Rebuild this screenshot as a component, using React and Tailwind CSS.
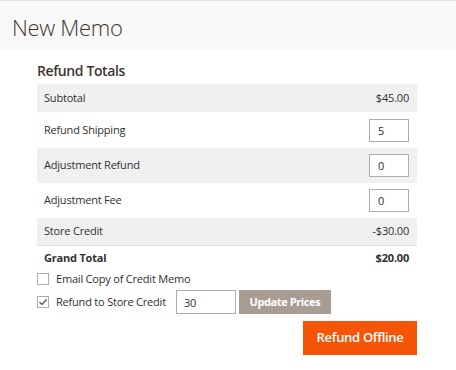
export default function App() {
  const font = { fontFamily: '"Open Sans", "Liberation Sans", sans-serif' };
  return (
    <div className="w-[456px] h-[370px] bg-white text-[#303030] overflow-hidden" style={font}>
      <div className="h-[50px] bg-[#f8f8f8] border-t border-[#e3e3e3] flex items-center pl-[12px]">
        <h1 className="text-[22px] font-light text-[#41362f] leading-none mt-[3px] tracking-[-0.3px]">New Memo</h1>
      </div>
      <div className="pl-[37px] pt-[11px]">
        <div className="w-[380px]">
          <div className="h-[20px] leading-[20px] text-[14px] font-semibold text-[#41362f] mb-[3px] tracking-[-0.4px]">Refund Totals</div>
          <div className="text-[11px] tracking-[-0.2px]">
            <div className="h-[28px] bg-[#f0f0f0] flex items-center justify-between pl-[7px] pr-[8px]">
              <span>Subtotal</span>
              <span>$45.00</span>
            </div>
            <div className="h-[36px] flex items-center justify-between pl-[7px] pr-[8px]">
              <span>Refund Shipping</span>
              <input className="w-[40px] h-[23px] border border-[#adadad] bg-white px-[8px] text-[11px] outline-none" defaultValue="5" />
            </div>
            <div className="h-[35px] bg-[#f0f0f0] flex items-center justify-between pl-[7px] pr-[8px]">
              <span>Adjustment Refund</span>
              <input className="w-[40px] h-[23px] border border-[#adadad] bg-white px-[8px] text-[11px] outline-none" defaultValue="0" />
            </div>
            <div className="h-[35px] flex items-center justify-between pl-[7px] pr-[8px]">
              <span>Adjustment Fee</span>
              <input className="w-[40px] h-[23px] border border-[#adadad] bg-white px-[8px] text-[11px] outline-none" defaultValue="0" />
            </div>
            <div className="h-[28px] bg-[#f0f0f0] flex items-center justify-between pl-[7px] pr-[8px] border-b border-[#e3e3e3]">
              <span>Store Credit</span>
              <span>-$30.00</span>
            </div>
            <div className="h-[24px] flex items-center justify-between pl-[7px] pr-[8px] font-bold">
              <span>Grand Total</span>
              <span>$20.00</span>
            </div>
            <div className="h-[16px] mt-[1px] flex items-center gap-[7px]">
              <span className="w-[12px] h-[12px] border border-[#adadad] bg-white"></span>
              <span>Email Copy of Credit Memo</span>
            </div>
            <div className="h-[24px] mt-[3px] flex items-center">
              <span className="w-[12px] h-[12px] border border-[#adadad] bg-white flex items-center justify-center">
                <svg width="10" height="10" viewBox="0 0 10 10" fill="none" stroke="#514943" strokeWidth="1.2">
                  <path d="M1.5 5.2 L4 7.5 L8.5 2.5" />
                </svg>
              </span>
              <span className="ml-[7px]">Refund to Store Credit</span>
              <input className="ml-[10px] w-[60px] h-[24px] border border-[#adadad] bg-white px-[7px] text-[11px] outline-none" defaultValue="30" />
              <button className="ml-[3px] w-[92px] h-[24px] bg-[#a79d95] text-white font-bold text-[11px] tracking-[-0.4px]">Update Prices</button>
            </div>
            <div className="mt-[7px] flex justify-end">
              <button className="w-[114px] h-[34px] bg-[#f55507] text-white font-semibold text-[13px] tracking-[-0.3px]">Refund Offline</button>
            </div>
          </div>
        </div>
      </div>
    </div>
  );
}
